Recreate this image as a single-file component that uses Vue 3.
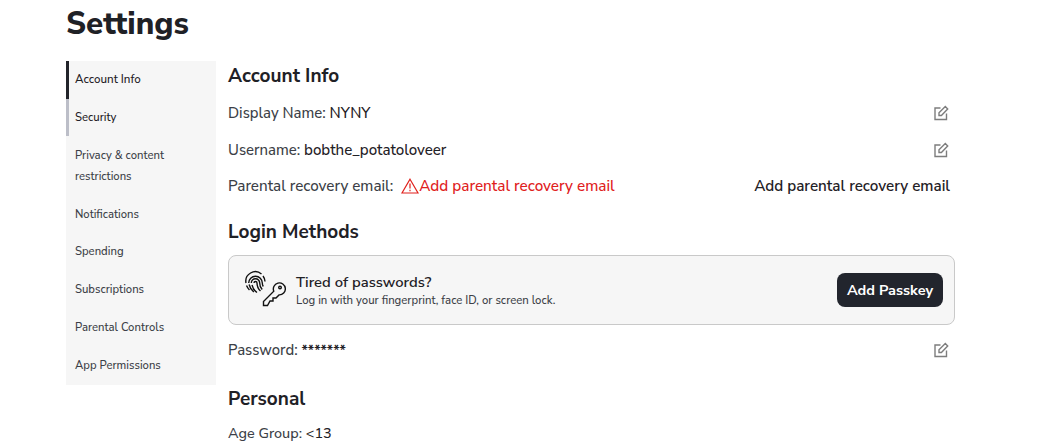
<script setup>
const nav = [
  { label: 'Account Info', state: 'active' },
  { label: 'Security', state: 'hover' },
  { label: 'Privacy & content restrictions', state: 'tall' },
  { label: 'Notifications' },
  { label: 'Spending' },
  { label: 'Subscriptions' },
  { label: 'Parental Controls' },
  { label: 'App Permissions' }
]
</script>

<template>
  <div class="page">
    <h1 class="title">Settings</h1>
    <div class="layout">
      <nav class="side">
        <a v-for="n in nav" :key="n.label" class="nav" :class="n.state">{{ n.label }}</a>
      </nav>
      <main class="main">
        <h2 class="h h-first">Account Info</h2>
        <div class="row r1">
          <span class="lab">Display Name: <span class="val">NYNY</span></span>
          <svg class="edit" viewBox="0 0 16 16"><path d="M7.500 3H2v11.500h11.500V8.500M6 10.500V7.800L12.300 1.500l2.400 2.400-6.300 6.600z"/></svg>
        </div>
        <div class="row r2">
          <span class="lab">Username: <span class="val">bobthe_potatoloveer</span></span>
          <svg class="edit" viewBox="0 0 16 16"><path d="M7.500 3H2v11.500h11.500V8.500M6 10.500V7.800L12.300 1.500l2.400 2.400-6.300 6.600z"/></svg>
        </div>
        <div class="row r3">
          <span class="lab parental">Parental recovery email:
            <span class="warn">
              <svg class="tri" viewBox="0 0 18 16"><path d="M9 1.200 17 15H1zM9 5.500v5M9 11.800v1.500"/></svg>Add parental recovery email
            </span>
          </span>
          <a class="addlink">Add parental recovery email</a>
        </div>
        <h2 class="h h-login">Login Methods</h2>
        <section class="card">
          <svg class="art" viewBox="0 0 42 38">
            <g class="fp">
              <path d="M2 14a9.500 9.500 0 0 1 15.500-9"/>
              <path d="M19 7a9.500 9.500 0 0 1 2 5.500"/>
              <path d="M4.700 14a6.800 6.800 0 1 1 13.600 0c0 1.500.3 2.500 1 3.500"/>
              <path d="M7.300 14a4.200 4.200 0 1 1 8.400 0c0 2.500 1 5 2.500 6.500"/>
              <path d="M10 14a1.500 1.500 0 1 1 3 0c0 3 1.300 6 3.500 8"/>
              <path d="M2.500 16.500c.7 1.700 1.700 3.200 3 4.500"/>
              <path d="M5.100 15.500c.7 3 2.400 5.600 4.700 7.500"/>
              <path d="M8 16c.7 3 2.300 5.700 5 7.500"/>
            </g>
            <g class="key">
              <path d="M19.500 36.500v-4l10.300-10.300a6 6 0 1 1 5.200 3.700L32 29h-3v3h-3l-2.500 4.500z"/>
              <circle cx="36" cy="18.500" r="1.300"/>
            </g>
          </svg>
          <div class="cardtext">
            <div class="ct">Tired of passwords?</div>
            <div class="cs">Log in with your fingerprint, face ID, or screen lock.</div>
          </div>
          <button class="btn">Add Passkey</button>
        </section>
        <div class="row r4">
          <span class="lab">Password: <span class="val stars">*******</span></span>
          <svg class="edit" viewBox="0 0 16 16"><path d="M7.500 3H2v11.500h11.500V8.500M6 10.500V7.800L12.300 1.500l2.400 2.400-6.300 6.600z"/></svg>
        </div>
        <h2 class="h h-personal">Personal</h2>
        <div class="row r5">
          <span class="lab age">Age Group: <span class="val">&lt;13</span></span>
        </div>
      </main>
    </div>
  </div>
</template>

<style>
html, body { margin: 0; background: #fff; overflow: hidden; }
</style>

<style scoped>
.page {
  width: 1047px;
  height: 446px;
  box-sizing: border-box;
  padding: 0 92px 0 66px;
  overflow: hidden;
  font-family: "Nunito Sans", "Noto Sans", "Open Sans", sans-serif;
  color: #1f2126;
}
.title {
  margin: 0;
  height: 61px;
  padding-top: 5px;
  box-sizing: border-box;
  font-size: 31.300px;
  line-height: 38px;
  font-weight: 800;
  color: #1f2126;
}
.layout { display: flex; gap: 12px; align-items: flex-start; }
.side {
  width: 150px;
  flex: none;
  background: #f6f6f6;
  display: flex;
  flex-direction: column;
  padding-bottom: 1px;
}
.nav {
  box-sizing: border-box;
  border-left: 3.500px solid transparent;
  padding: 8.500px 12px 8px 6px;
  font-size: 11.300px;
  line-height: 21.500px;
  font-weight: 500;
  color: #3c3f47;
  height: 37.750px;
}
.nav.active { border-left-color: #22242a; color: #1f2126; height: 38px; padding-top: 8px; font-size: 11.600px; }
.nav.hover { border-left-color: #bcbec8; color: #1f2126; height: 37px; padding-top: 8px; }
.nav.tall { height: 59px; padding: 9px 30px 8px 6px; line-height: 21px; }
.main { flex: 1; min-width: 0; }
.h {
  margin: 0;
  font-size: 19px;
  line-height: 24px;
  font-weight: 700;
  color: #1f2126;
}
.h-first { margin-top: 3px; }
.h-login { margin-top: 22px; }
.h-personal { margin-top: 25px; }
.row {
  display: flex;
  align-items: center;
  justify-content: space-between;
  height: 24px;
  padding-right: 6px;
}
.r1 { margin-top: 13px; }
.r2 { margin-top: 13px; }
.r3 { margin-top: 12px; padding-right: 5px; }
.r4 { margin-top: 13px; }
.r5 { margin-top: 10px; }
.lab { font-size: 14.900px; font-weight: 500; color: #3c3f47; white-space: nowrap; }
.age { font-size: 14.400px; }
.val { color: #1f2126; font-size: 15.100px; }
.stars { font-size: 14px; font-weight: 700; }
.age .val { font-size: 14.400px; }
.parental { display: flex; align-items: center; gap: 8px; font-size: 15.200px; }
.warn { display: inline-flex; align-items: center; color: #e0201c; font-size: 15.300px; }
.tri { width: 18px; height: 16px; fill: none; stroke: #e0201c; stroke-width: 1.200; }
.addlink { font-size: 15.200px; font-weight: 600; color: #1f2126; }
.edit { width: 16px; height: 16px; fill: none; stroke: #7d7d7d; stroke-width: 1.400; }
.card {
  margin-top: 11px;
  height: 70px;
  box-sizing: border-box;
  border: 1px solid #c9c9c9;
  border-radius: 8px;
  background: #f6f6f6;
  display: flex;
  align-items: center;
  padding: 0 11px 0 15px;
}
.art { width: 42px; height: 38px; flex: none; fill: none; stroke: #111; stroke-width: 1.400; margin: 0 10px 5px 0; }
.cardtext { flex: 1; }
.ct { font-size: 14.800px; line-height: 19px; font-weight: 600; color: #1f2126; }
.cs { font-size: 11.350px; line-height: 15px; font-weight: 500; color: #3c3f47; margin-top: 1px; }
.btn {
  width: 106px;
  height: 34px;
  border: 0;
  border-radius: 8px;
  background: #22252d;
  color: #fff;
  font-family: inherit;
  font-size: 14.500px;
  font-weight: 700;
  padding: 0;
}
</style>
